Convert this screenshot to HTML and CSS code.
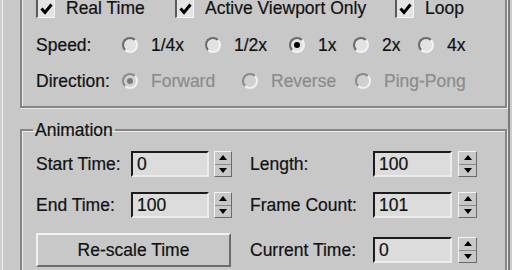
FILE: index.html
```html
<!DOCTYPE html>
<html>
<head>
<meta charset="utf-8">
<link rel="stylesheet" href="styles.css">
</head>
<body>
<div class="dialog">
  <div class="group playback">
    <div class="row">
      <label class="check w-real"><span class="box"><svg width="15" height="14" viewBox="0 0 15 14"><polyline points="2.5,6.5 6,10.5 12.5,2.5" fill="none" stroke="#000" stroke-width="3"/></svg></span>Real Time</label>
      <label class="check w-active"><span class="box"><svg width="15" height="14" viewBox="0 0 15 14"><polyline points="2.5,6.5 6,10.5 12.5,2.5" fill="none" stroke="#000" stroke-width="3"/></svg></span>Active Viewport Only</label>
      <label class="check"><span class="box"><svg width="15" height="14" viewBox="0 0 15 14"><polyline points="2.5,6.5 6,10.5 12.5,2.5" fill="none" stroke="#000" stroke-width="3"/></svg></span>Loop</label>
    </div>
    <div class="row">
      <span class="lbl">Speed:</span>
      <span class="radio w-s1"><span class="dot"></span>1/4x</span>
      <span class="radio w-s2"><span class="dot"></span>1/2x</span>
      <span class="radio w-s3"><span class="dot on"></span>1x</span>
      <span class="radio w-s4"><span class="dot"></span>2x</span>
      <span class="radio"><span class="dot"></span>4x</span>
    </div>
    <div class="row disabled">
      <span class="lbl">Direction:</span>
      <span class="radio w-d1"><span class="dot on"></span>Forward</span>
      <span class="radio w-d2"><span class="dot"></span>Reverse</span>
      <span class="radio"><span class="dot"></span>Ping-Pong</span>
    </div>
  </div>

  <fieldset class="group anim">
    <legend>Animation</legend>
    <div class="frow">
      <div class="field left"><span class="flbl">Start Time:</span><span class="input">0</span><span class="spin"><span class="up"></span><span class="down"></span></span></div>
      <div class="field right"><span class="flbl">Length:</span><span class="input">100</span><span class="spin"><span class="up"></span><span class="down"></span></span></div>
    </div>
    <div class="frow">
      <div class="field left"><span class="flbl">End Time:</span><span class="input">100</span><span class="spin"><span class="up"></span><span class="down"></span></span></div>
      <div class="field right"><span class="flbl">Frame Count:</span><span class="input">101</span><span class="spin"><span class="up"></span><span class="down"></span></span></div>
    </div>
    <div class="frow last">
      <div class="field left"><button class="btn">Re-scale Time</button></div>
      <div class="field right"><span class="flbl">Current Time:</span><span class="input">0</span><span class="spin"><span class="up"></span><span class="down"></span></span></div>
    </div>
  </fieldset>
</div>
</body>
</html>
```

FILE: styles.css
```css
html, body {
  margin: 0;
  padding: 0;
}
body {
  background: #cdcdcd;
  width: 512px;
  height: 270px;
  overflow: hidden;
  font-family: "Liberation Sans", Arial, sans-serif;
  font-size: 17.5px;
  color: #111;
  -webkit-text-stroke: 0.2px currentColor;
}
.dialog {
  margin-left: 2px;
  width: 505px;
  height: 270px;
  background: #c8c8c8;
  border-left: 1px solid #f2f2f2;
  border-right: 2px solid #7a7a7a;
  overflow: hidden;
}
.group {
  margin-left: 17px;
  width: 469px;
  border: 2px solid #858585;
  box-shadow: inset 1px 1px 0 #ececec, 1px 1px 0 #ececec;
}
.playback {
  margin-top: -12px;
  padding: 8px 0 15px 14px;
  display: flex;
  flex-direction: column;
  gap: 16.5px;
}
.row {
  display: flex;
  align-items: center;
  height: 20px;
  line-height: 16px;
  white-space: nowrap;
}
.check {
  display: flex;
  align-items: center;
}
.w-real { width: 139px; }
.w-active { width: 220px; }
.box {
  box-sizing: border-box;
  width: 19px;
  height: 20px;
  margin-right: 11px;
  background: #e4e4e4;
  border-style: solid;
  border-width: 2px 1px 1px 2px;
  border-color: #5a5a5a #f6f6f6 #f6f6f6 #5a5a5a;
  display: flex;
  align-items: center;
  justify-content: center;
}
.lbl { width: 86px; }
.radio {
  display: flex;
  align-items: center;
}
.dot {
  box-sizing: border-box;
  width: 16px;
  height: 16px;
  margin-right: 13px;
  border-radius: 50%;
  background: #e2e2e2;
  border: 2px solid;
  border-color: #6a6a6a #f3f3f3 #f3f3f3 #6a6a6a;
  display: flex;
  align-items: center;
  justify-content: center;
}
.dot.on::after {
  content: "";
  width: 6px;
  height: 6px;
  border-radius: 50%;
  background: #000;
}
.w-s1 { width: 83px; }
.w-s2 { width: 84px; }
.w-s3 { width: 64px; }
.w-s4 { width: 65px; }
.w-d1 { width: 120px; }
.w-d2 { width: 113px; }
.disabled { color: #8c8c8c; }
.disabled .lbl { color: #111; }
.disabled .dot { background: #d0d0d0; border-color: #8a8a8a #f0f0f0 #f0f0f0 #8a8a8a; }
.disabled .dot.on::after { background: #7a7a7a; }

.anim {
  margin-top: 12px;
  margin-bottom: 0;
  padding: 11px 0 20px 14px;
  min-width: 0;
  display: flex;
  flex-direction: column;
  gap: 15px;
}
.anim legend {
  margin-left: -3px;
  padding: 0 2px;
  line-height: 20px;
}
.frow {
  display: flex;
  align-items: center;
  height: 26px;
}
.frow.last { height: 34px; }
.field {
  display: flex;
  align-items: center;
}
.field.left { width: 214px; }
.left .flbl { width: 95px; }
.right .flbl { width: 123px; }
.input {
  box-sizing: border-box;
  height: 26px;
  width: 78px;
  padding-left: 4px;
  background: #dcdcdc;
  border-style: solid;
  border-width: 2px 2px 2px 2px;
  border-color: #1c1c1c #ececec #ececec #1c1c1c;
  line-height: 22px;
}
.right .input { width: 79px; }
.spin {
  box-sizing: border-box;
  margin-left: 5px;
  width: 18px;
  height: 26px;
  border: 1px solid;
  border-color: #f4f4f4 #6a6a6a #6a6a6a #f4f4f4;
  display: flex;
  flex-direction: column;
}
.right .spin { margin-left: 6px; width: 19px; }
.spin .up, .spin .down {
  flex: 1;
  display: flex;
  align-items: center;
  justify-content: center;
}
.spin .up { border-bottom: 1px solid #8a8a8a; }
.spin .up::after {
  content: "";
  border-left: 4px solid transparent;
  border-right: 4px solid transparent;
  border-bottom: 5px solid #000;
}
.spin .down::after {
  content: "";
  border-left: 4px solid transparent;
  border-right: 4px solid transparent;
  border-top: 5px solid #000;
}
.btn {
  box-sizing: border-box;
  width: 195px;
  height: 34px;
  background: #c8c8c8;
  font: inherit;
  color: #111;
  border: 2px solid;
  border-color: #f2f2f2 #6c6c6c #6c6c6c #f2f2f2;
  padding: 0;
}
```
